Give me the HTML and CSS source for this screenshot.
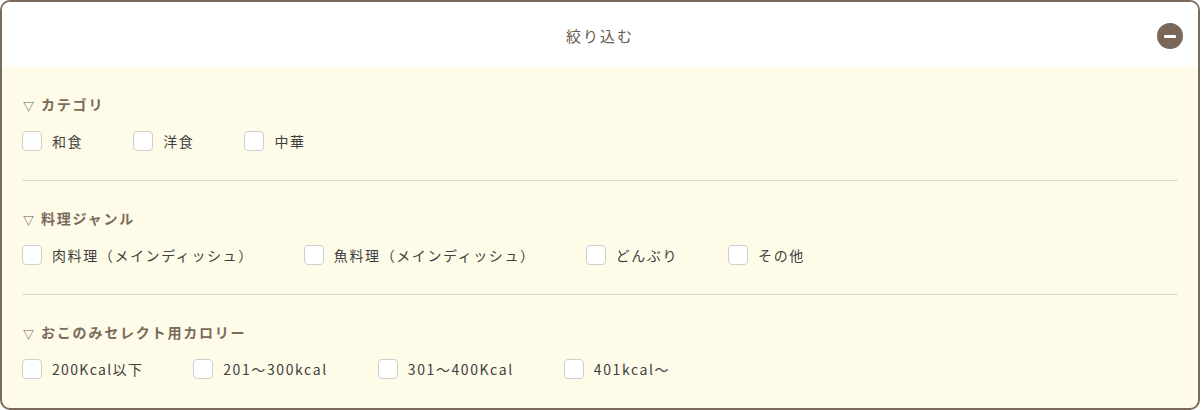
FILE: index.html
```html
<!DOCTYPE html>
<html lang="ja">
<head>
<meta charset="UTF-8">
<meta name="viewport" content="width=device-width, initial-scale=1.0">
<title>絞り込む</title>
<link rel="stylesheet" href="styles.css">
</head>
<body>

<div class="filter">
  <div class="filter-head">
    <span class="filter-title">絞り込む</span>
    <span class="toggle"><span class="bar"></span></span>
  </div>
  <div class="filter-body">
    <div class="group">
      <h3><span class="arrow">▽</span>カテゴリ</h3>
      <div class="options">
        <label><span class="box"></span><span>和食</span></label>
        <label><span class="box"></span><span>洋食</span></label>
        <label><span class="box"></span><span>中華</span></label>
      </div>
    </div>
    <div class="group">
      <h3><span class="arrow">▽</span>料理ジャンル</h3>
      <div class="options">
        <label><span class="box"></span><span>肉料理（メインディッシュ）</span></label>
        <label><span class="box"></span><span>魚料理（メインディッシュ）</span></label>
        <label><span class="box"></span><span>どんぶり</span></label>
        <label><span class="box"></span><span>その他</span></label>
      </div>
    </div>
    <div class="group">
      <h3><span class="arrow">▽</span>おこのみセレクト用カロリー</h3>
      <div class="options calories">
        <label><span class="box"></span><span>200Kcal以下</span></label>
        <label><span class="box"></span><span>201～300kcal</span></label>
        <label><span class="box"></span><span>301～400Kcal</span></label>
        <label><span class="box"></span><span>401kcal～</span></label>
      </div>
    </div>
  </div>
</div>

</body>
</html>
```
FILE: styles.css
```css
body {
  font-family: "Noto Sans CJK JP", "Noto Sans", sans-serif;
  margin: 0;
  padding: 0;
  background-color: #fff;
}
.filter {
  width: 1200px;
  height: 410px;
  box-sizing: border-box;
  border: 2px solid #7b6b5c;
  border-radius: 10px;
  overflow: hidden;
  background-color: #fefbe8;
}
.filter-head {
  height: 65px;
  padding-top: 2px;
  box-sizing: border-box;
  background-color: #fff;
  display: flex;
  align-items: center;
  justify-content: center;
  position: relative;
}
.filter-title {
  font-size: 15px;
  line-height: 20px;
  letter-spacing: 2px;
  color: #6b5b50;
}
.toggle {
  position: absolute;
  right: 15px;
  top: 21px;
  width: 26px;
  height: 26px;
  border-radius: 50%;
  background-color: #7b6757;
  display: flex;
  align-items: center;
  justify-content: center;
}
.toggle .bar {
  width: 12px;
  height: 3px;
  border-radius: 1px;
  background-color: #fff;
}
.filter-body {
  padding: 0 20px;
}
.group {
  padding: 27px 0 29px;
  border-bottom: 1px solid #ddd9cc;
}
.group:last-child {
  border-bottom: none;
  padding-bottom: 0;
}
h3 {
  margin: 0 0 17px;
  height: 20px;
  font-size: 14px;
  line-height: 20px;
  font-weight: bold;
  letter-spacing: 1.8px;
  color: #7a6a5a;
  display: flex;
  align-items: center;
}
.arrow {
  font-size: 11px;
  line-height: 10px;
  font-weight: bold;
  color: #6b5b50;
  margin: 3px 7px 0 1px;
  letter-spacing: 0;
}
.options {
  display: flex;
  height: 20px;
}
label {
  display: flex;
  align-items: center;
  height: 20px;
  line-height: 20px;
  margin-right: 50px;
  font-size: 14px;
  letter-spacing: 1.6px;
  color: #3f3f3f;
}
.calories label:first-child {
  letter-spacing: 1.35px;
}
.box {
  width: 18px;
  height: 18px;
  border: 1px solid #cfcfcf;
  border-radius: 4px;
  background-color: #fff;
  margin-right: 10px;
}
```
